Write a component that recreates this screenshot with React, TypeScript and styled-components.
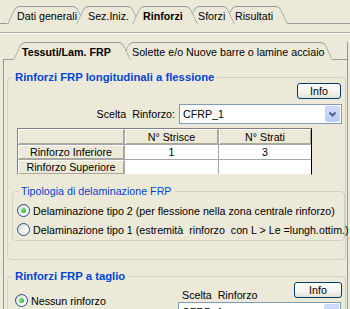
import React from "react";
import styled, { createGlobalStyle } from "styled-components";

const GlobalStyle = createGlobalStyle`
  html, body {
    margin: 0;
    padding: 0;
    background: #ece9d8;
  }
  body {
    font-family: "Liberation Sans", Arial, sans-serif;
    font-size: 10.7px;
    color: #000;
  }
`;

const edge = "#919b9c";

const Window = styled.div`
  width: 350px;
  height: 309px;
  overflow: hidden;
  background: #ece9d8;
  display: flex;
  flex-direction: column;
`;

const TabStrip = styled.div<{ $top: number; $inset?: number; $trim?: number }>`
  display: flex;
  align-items: flex-end;
  padding-top: ${(p) => p.$top}px;
  margin-left: ${(p) => p.$inset ?? 0}px;
  margin-right: ${(p) => p.$trim ?? 0}px;
`;

const Stub = styled.div<{ $w?: number; $edge?: boolean }>`
  align-self: stretch;
  ${(p) => (p.$w ? `width: ${p.$w}px;` : "flex: 1;")}
  border-bottom: 1px solid ${edge};
  ${(p) => (p.$edge ? `border-right: 1px solid ${edge};` : "")}
`;

const Tab = styled.div<{
  $w: number;
  $shift?: number;
  $z: number;
  $active?: boolean;
  $pad?: number;
}>`
  position: relative;
  z-index: ${(p) => p.$z};
  box-sizing: border-box;
  flex: none;
  width: ${(p) => p.$w}px;
  height: 18px;
  margin-left: ${(p) => -(p.$shift ?? 0)}px;
  padding-left: ${(p) => p.$pad ?? 11}px;
  padding-top: 1px;
  display: flex;
  align-items: center;
  white-space: pre;
  font-weight: ${(p) => (p.$active ? 700 : 400)};

  &::before,
  &::after {
    content: "";
    position: absolute;
    top: 0;
    bottom: 0;
    width: 50%;
    background: #ece9d8;
    border-top: 1px solid ${edge};
    z-index: -1;
  }
  &::before {
    left: 0;
    border-left: 1px solid ${edge};
    border-top-left-radius: 5px;
    transform-origin: 0 100%;
    transform: skewX(-25deg);
  }
  &::after {
    right: 0;
    border-right: 1px solid ${edge};
    border-top-right-radius: 5px;
    transform-origin: 100% 100%;
    transform: skewX(25deg);
  }
`;

const Rule = styled.div`
  margin-top: 8px;
  border-top: 1px solid #aca899;
  border-bottom: 1px solid #fff;
`;

const Page = styled.div`
  flex: 1;
  margin: 0 2px 0 3px;
  border-left: 1px solid ${edge};
  border-right: 1px solid ${edge};
  display: flex;
  flex-direction: column;
`;

const Group = styled.fieldset<{ $ml: number; $mt: number; $w: number; $pb?: number }>`
  box-sizing: border-box;
  margin: ${(p) => p.$mt}px 0 0 ${(p) => p.$ml}px;
  width: ${(p) => p.$w}px;
  min-width: 0;
  padding: 0 0 ${(p) => p.$pb ?? 0}px 0;
  border: 1px solid #d0d0bf;
  border-radius: 4px;
  flex: none;
`;

const Legend = styled.legend<{ $bold?: boolean }>`
  margin-left: ${(p) => (p.$bold ? 4 : 5)}px;
  padding: 0 3px;
  line-height: 12px;
  color: #0046d5;
  font-weight: ${(p) => (p.$bold ? 700 : 400)};
  font-size: ${(p) => (p.$bold ? "11.3px" : "10.7px")};
`;

const RightRow = styled.div<{ $mt?: number; $pr: number; $gap?: number }>`
  display: flex;
  justify-content: flex-end;
  align-items: center;
  gap: ${(p) => p.$gap ?? 0}px;
  margin-top: ${(p) => p.$mt ?? 0}px;
  padding-right: ${(p) => p.$pr}px;
`;

const Button = styled.button<{ $w: number }>`
  box-sizing: border-box;
  width: ${(p) => p.$w}px;
  height: 16px;
  padding: 0;
  border: 1px solid #003c74;
  border-radius: 3px;
  background: linear-gradient(#ffffff, #f4f3ee 60%, #e3e0d6);
  font: inherit;
  color: #000;
  line-height: 14px;
`;

const Label = styled.span`
  white-space: pre;
`;

const Combo = styled.div<{ $w: number; $mt?: number }>`
  box-sizing: border-box;
  width: ${(p) => p.$w}px;
  height: 20px;
  margin-top: ${(p) => p.$mt ?? 0}px;
  border: 1px solid #7f9db9;
  background: #fff;
  display: flex;
  align-items: center;
  padding: 1px 1px 1px 3px;
`;

const ComboText = styled.span`
  flex: 1;
`;

const DropButton = styled.span`
  box-sizing: border-box;
  width: 15px;
  height: 16px;
  border-radius: 2px;
  border: 1px solid #c3d3fd;
  background: linear-gradient(#d1dcfb, #b8cbf6);
  display: flex;
  align-items: center;
  justify-content: center;
`;

const Sheet = styled.div`
  display: grid;
  grid-template-columns: 106px 93px 92px;
  grid-template-rows: 15px 14px 14px;
  gap: 1px;
  width: fit-content;
  margin: 4px 0 0 9px;
  background: #a6a6a6;
  border: 1px solid #808080;
  border-right-color: #000;
  border-bottom-color: #ece9d8;
`;

const Cell = styled.div<{ $fixed?: boolean }>`
  display: flex;
  align-items: center;
  justify-content: center;
  line-height: 12px;
  background: ${(p) => (p.$fixed ? "#ece9d8" : "#fff")};
  box-shadow: ${(p) =>
    p.$fixed ? "inset 1px 1px #fff, inset -1px -1px #aca899" : "none"};
`;

const RadioRow = styled.label<{ $mt: number; $ml: number }>`
  display: flex;
  align-items: center;
  gap: 3px;
  height: 13px;
  margin: ${(p) => p.$mt}px 0 0 ${(p) => p.$ml}px;
  white-space: pre;
`;

const RadioDot = styled.span<{ $on?: boolean }>`
  box-sizing: border-box;
  width: 13px;
  height: 13px;
  flex: none;
  border-radius: 50%;
  border: 1px solid #1c5180;
  background: linear-gradient(135deg, #d8d8d1, #fbfbf9 70%, #ffffff);
  display: flex;
  align-items: center;
  justify-content: center;

  &::after {
    content: "";
    width: 5px;
    height: 5px;
    border-radius: 50%;
    background: radial-gradient(circle at 35% 35%, #7ee67e, #21a121);
    display: ${(p) => (p.$on ? "block" : "none")};
  }
`;

const Split = styled.div`
  display: grid;
  grid-template-columns: 170px 1fr;
`;

const LeftCol = styled.div`
  padding-top: 12px;
`;

const RightCol = styled.div`
  display: flex;
  flex-direction: column;
`;

const HeadRow = styled.div`
  display: flex;
  align-items: flex-end;
  justify-content: space-between;
  padding-right: 3px;
`;

const Caption = styled.span`
  padding-left: 4px;
  line-height: 12px;
  margin-bottom: -3px;
  white-space: pre;
`;

function Chevron() {
  return (
    <svg width="9" height="7" viewBox="0 0 9 7">
      <polyline
        points="1.5,1.5 4.5,4.5 7.5,1.5"
        fill="none"
        stroke="#4d6185"
        strokeWidth="2"
      />
    </svg>
  );
}

export default function App() {
  return (
    <Window>
      <GlobalStyle />
      <TabStrip $top={6}>
        <Stub $w={7} />
        <Tab $w={77} $z={1} $pad={10}>
          Dati generali
        </Tab>
        <Tab $w={64} $shift={8} $z={2} $pad={12}>
          Sez.Iniz.
        </Tab>
        <Tab $w={65} $shift={8} $z={5} $active>
          Rinforzi
        </Tab>
        <Tab $w={47} $shift={10} $z={4}>
          Sforzi
        </Tab>
        <Tab $w={63} $shift={10} $z={3}>
          Risultati
        </Tab>
        <Stub />
      </TabStrip>
      <Rule />
      <TabStrip $top={8} $inset={3} $trim={2}>
        <Stub $w={10} />
        <Tab $w={118} $z={3} $active $pad={9}>
          Tessuti/Lam. FRP
        </Tab>
        <Tab $w={212} $shift={10} $z={2}>
          Solette e/o Nuove barre o lamine acciaio
        </Tab>
        <Stub $edge />
      </TabStrip>
      <Page>
        <Group $ml={3} $mt={11} $w={339} $pb={18}>
          <Legend $bold>Rinforzi FRP longitudinali a flessione</Legend>
          <RightRow $pr={4}>
            <Button $w={44}>Info</Button>
          </RightRow>
          <RightRow $mt={5} $pr={3} $gap={4}>
            <Label>Scelta  Rinforzo:</Label>
            <Combo $w={163}>
              <ComboText>CFRP_1</ComboText>
              <DropButton>
                <Chevron />
              </DropButton>
            </Combo>
          </RightRow>
          <Sheet>
            <Cell $fixed />
            <Cell $fixed>N° Strisce</Cell>
            <Cell $fixed>N° Strati</Cell>
            <Cell $fixed>Rinforzo Inferiore</Cell>
            <Cell>1</Cell>
            <Cell>3</Cell>
            <Cell $fixed>Rinforzo Superiore</Cell>
            <Cell />
            <Cell />
          </Sheet>
          <Group $ml={4} $mt={10} $w={333} $pb={4}>
            <Legend>Tipologia di delaminazione FRP</Legend>
            <RadioRow $mt={7} $ml={4}>
              <RadioDot $on />
              Delaminazione tipo 2 (per flessione nella zona centrale rinforzo)
            </RadioRow>
            <RadioRow $mt={6} $ml={4}>
              <RadioDot />
              Delaminazione tipo 1 (estremità  rinforzo  con L &gt; Le =lungh.ottim.)
            </RadioRow>
          </Group>
        </Group>
        <Group $ml={3} $mt={10} $w={339}>
          <Legend $bold>Rinforzi FRP a taglio</Legend>
          <Split>
            <LeftCol>
              <RadioRow $mt={0} $ml={7}>
                <RadioDot $on />
                Nessun rinforzo
              </RadioRow>
            </LeftCol>
            <RightCol>
              <HeadRow>
                <Caption>Scelta  Rinforzo</Caption>
                <Button $w={48}>Info</Button>
              </HeadRow>
              <Combo $w={163} $mt={4}>
                <ComboText>CFRP_1</ComboText>
                <DropButton>
                  <Chevron />
                </DropButton>
              </Combo>
            </RightCol>
          </Split>
        </Group>
      </Page>
    </Window>
  );
}
